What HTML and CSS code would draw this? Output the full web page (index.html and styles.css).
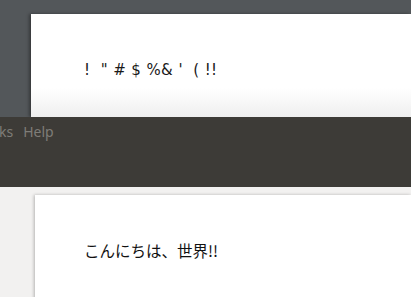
FILE: index.html
```html
<!DOCTYPE html>
<html lang="en">
<head>
    <meta charset="UTF-8">
    <title>Text Rendering</title>
    <link rel="stylesheet" href="styles.css">
</head>
<body>

<div class="top-area">
    <div class="sheet sheet-top">
        <p class="sample">!&nbsp;&nbsp;"&nbsp;#&nbsp;$&nbsp;%&amp;&nbsp;'&nbsp;&nbsp;(&nbsp;!!</p>
    </div>
</div>

<div class="menubar">
    <span class="menu-item">ks</span>
    <span class="menu-item">Help</span>
</div>

<div class="bottom-area">
    <div class="sheet sheet-bottom">
        <p class="sample-jp">こんにちは、世界!!</p>
    </div>
</div>

</body>
</html>
```

FILE: styles.css
```css
/* General Body Styles */
body {
    margin: 0;
    padding: 0;
    width: 411px;
    height: 297px;
    overflow: hidden;
    font-family: "DejaVu Sans", sans-serif;
}

/* Top window */
.top-area {
    background-color: #53575a;
    padding: 14px 0 0 31px;
    height: 117px;
    box-sizing: border-box;
}

.sheet {
    background-color: #fff;
    box-shadow: -2px 0 3px rgba(0, 0, 0, 0.35);
}

.sheet-top {
    height: 103px;
    padding-left: 53px;
    box-sizing: border-box;
    background: linear-gradient(to bottom, #fff 72%, #efefef 100%);
}

.sample {
    margin: 0;
    padding-top: 47px;
    font-size: 15px;
    color: #1a1a1a;
    letter-spacing: 0.4px;
}

/* Menu bar */
.menubar {
    background-color: #3d3b37;
    height: 70px;
    display: flex;
    gap: 10px;
    padding: 5px 0 0 0;
    margin-left: -1px;
    box-sizing: border-box;
}

.menu-item {
    color: #7f7d78;
    font-size: 14px;
    font-family: "Noto Sans", sans-serif;
}

/* Bottom window */
.bottom-area {
    background-color: #f2f1f0;
    padding: 8px 0 0 35px;
    height: 110px;
    box-sizing: border-box;
}

.sheet-bottom {
    height: 110px;
    padding-left: 49px;
    box-sizing: border-box;
    box-shadow: -1px 0 3px rgba(0, 0, 0, 0.25);
}

.sample-jp {
    margin: 0;
    padding-top: 44px;
    font-size: 15.5px;
    color: #111;
    font-family: "Noto Sans CJK JP", sans-serif;
}
```
